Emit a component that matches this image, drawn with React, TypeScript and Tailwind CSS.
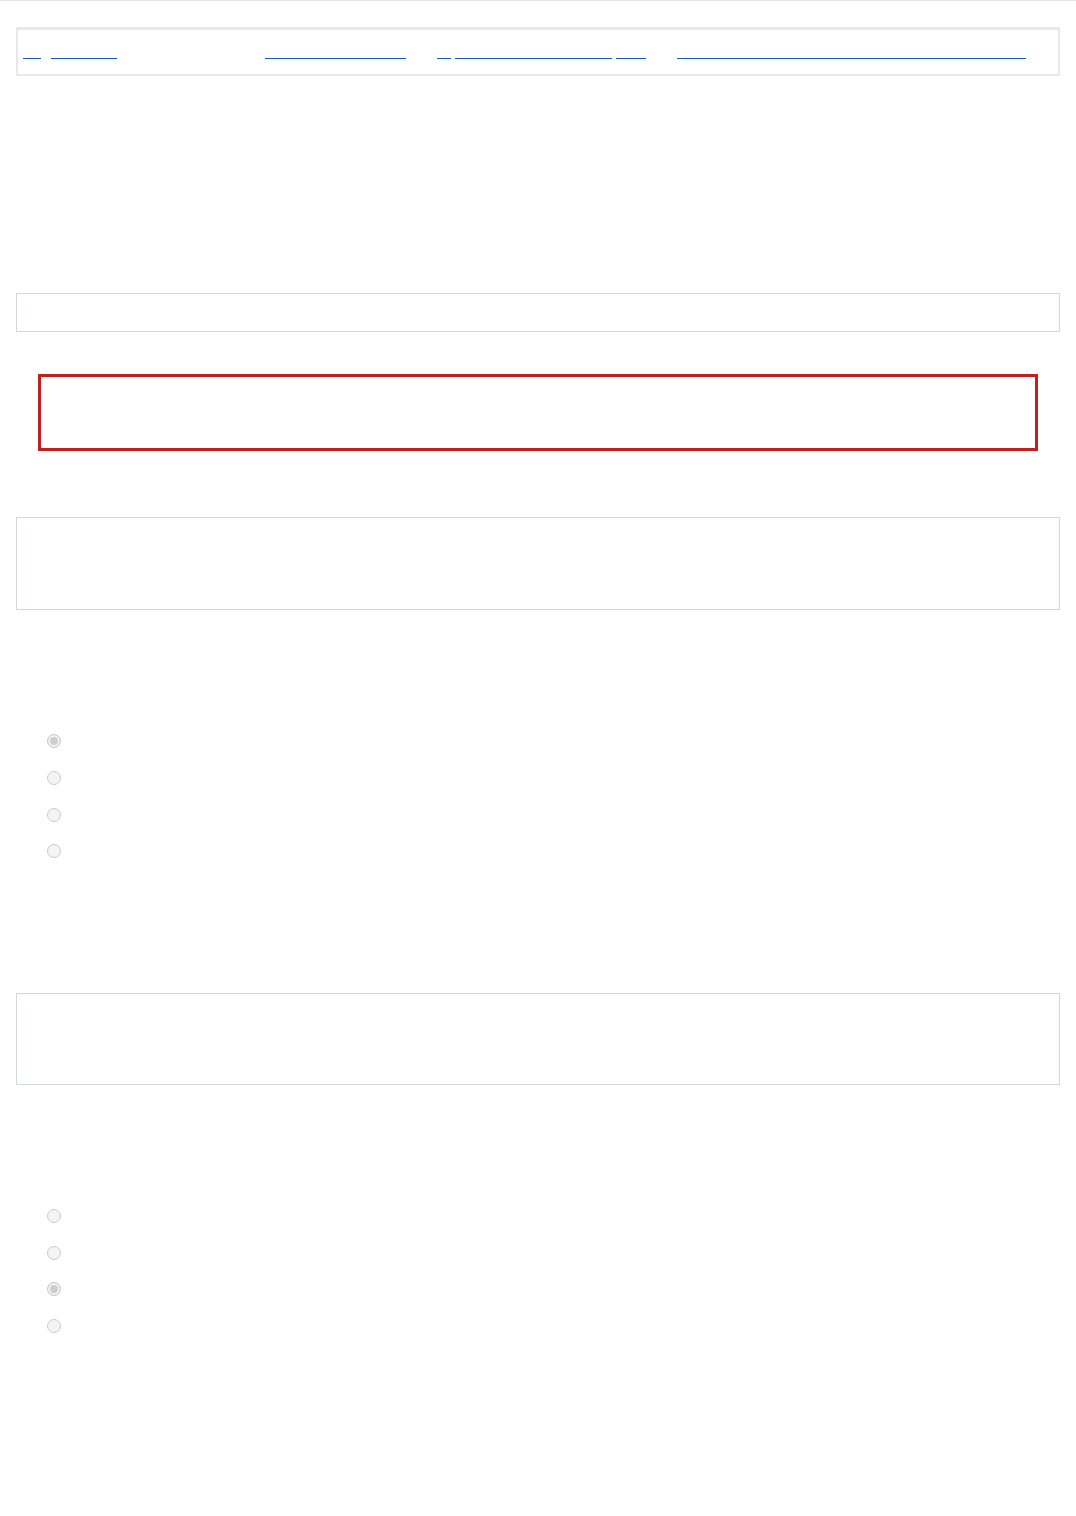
import React from 'react';

const navLinks = [
    { w: 'w-[18px]', ml: 'ml-0' },
    { w: 'w-[66px]', ml: 'ml-[10px]' },
    { w: 'w-[141px]', ml: 'ml-[148px]' },
    { w: 'w-[14px]', ml: 'ml-[31px]' },
    { w: 'w-[157px]', ml: 'ml-[4px]' },
    { w: 'w-[30px]', ml: 'ml-[4px]' },
    { w: 'w-[349px]', ml: 'ml-[31px]' },
];

function RadioGroup({ name, checked }: { name: string; checked: number }) {
    return (
        <div className="flex flex-col pl-[31px]">
            {[0, 1, 2, 3].map((i) => (
                <label key={i} className="flex h-[36.7px] items-center text-transparent">
                    <input
                        type="radio"
                        name={name}
                        disabled
                        defaultChecked={i === checked}
                        className="m-0 h-[14px] w-[14px] appearance-none rounded-full border border-[#cbcbcb] bg-[#f4f4f4] checked:bg-[#cdcdcd] checked:shadow-[inset_0_0_0_2px_#f4f4f4]"
                    />
                    <span className="ml-2">option</span>
                </label>
            ))}
        </div>
    );
}

export default function App() {
    return (
        <div className="min-h-[1516px] bg-white font-['Liberation_Sans',sans-serif] text-sm text-transparent">
            <div className="h-px bg-[#e6e3e3]" />
            <div className="px-4 pt-[26px]">
                {/* navigation */}
                <nav className="flex h-[49px] items-start border-2 border-t-[3px] border-[#e6e8eb] pl-[5px] pt-[28px]">
                    {navLinks.map((l, i) => (
                        <a
                            key={i}
                            href="#"
                            className={`${l.w} ${l.ml} block h-px bg-[#1558c0] text-transparent`}
                        >
                            <span className="sr-only">link</span>
                        </a>
                    ))}
                </nav>

                <div className="mt-[217px] h-[39px] border border-[#d3d6de]" />

                <div className="mx-[22px] mt-[42px] h-[77px] border-[3px] border-[#c21f1f]" />

                <div className="mt-[66px] h-[93px] border border-[#d3d6de]" />

                <div className="mt-[113px]">
                    <RadioGroup name="q1" checked={0} />
                </div>

                <div className="mt-[123px] h-[92px] border border-[#d3d6de]" />

                <div className="mt-[113px]">
                    <RadioGroup name="q2" checked={2} />
                </div>
            </div>
        </div>
    );
}
